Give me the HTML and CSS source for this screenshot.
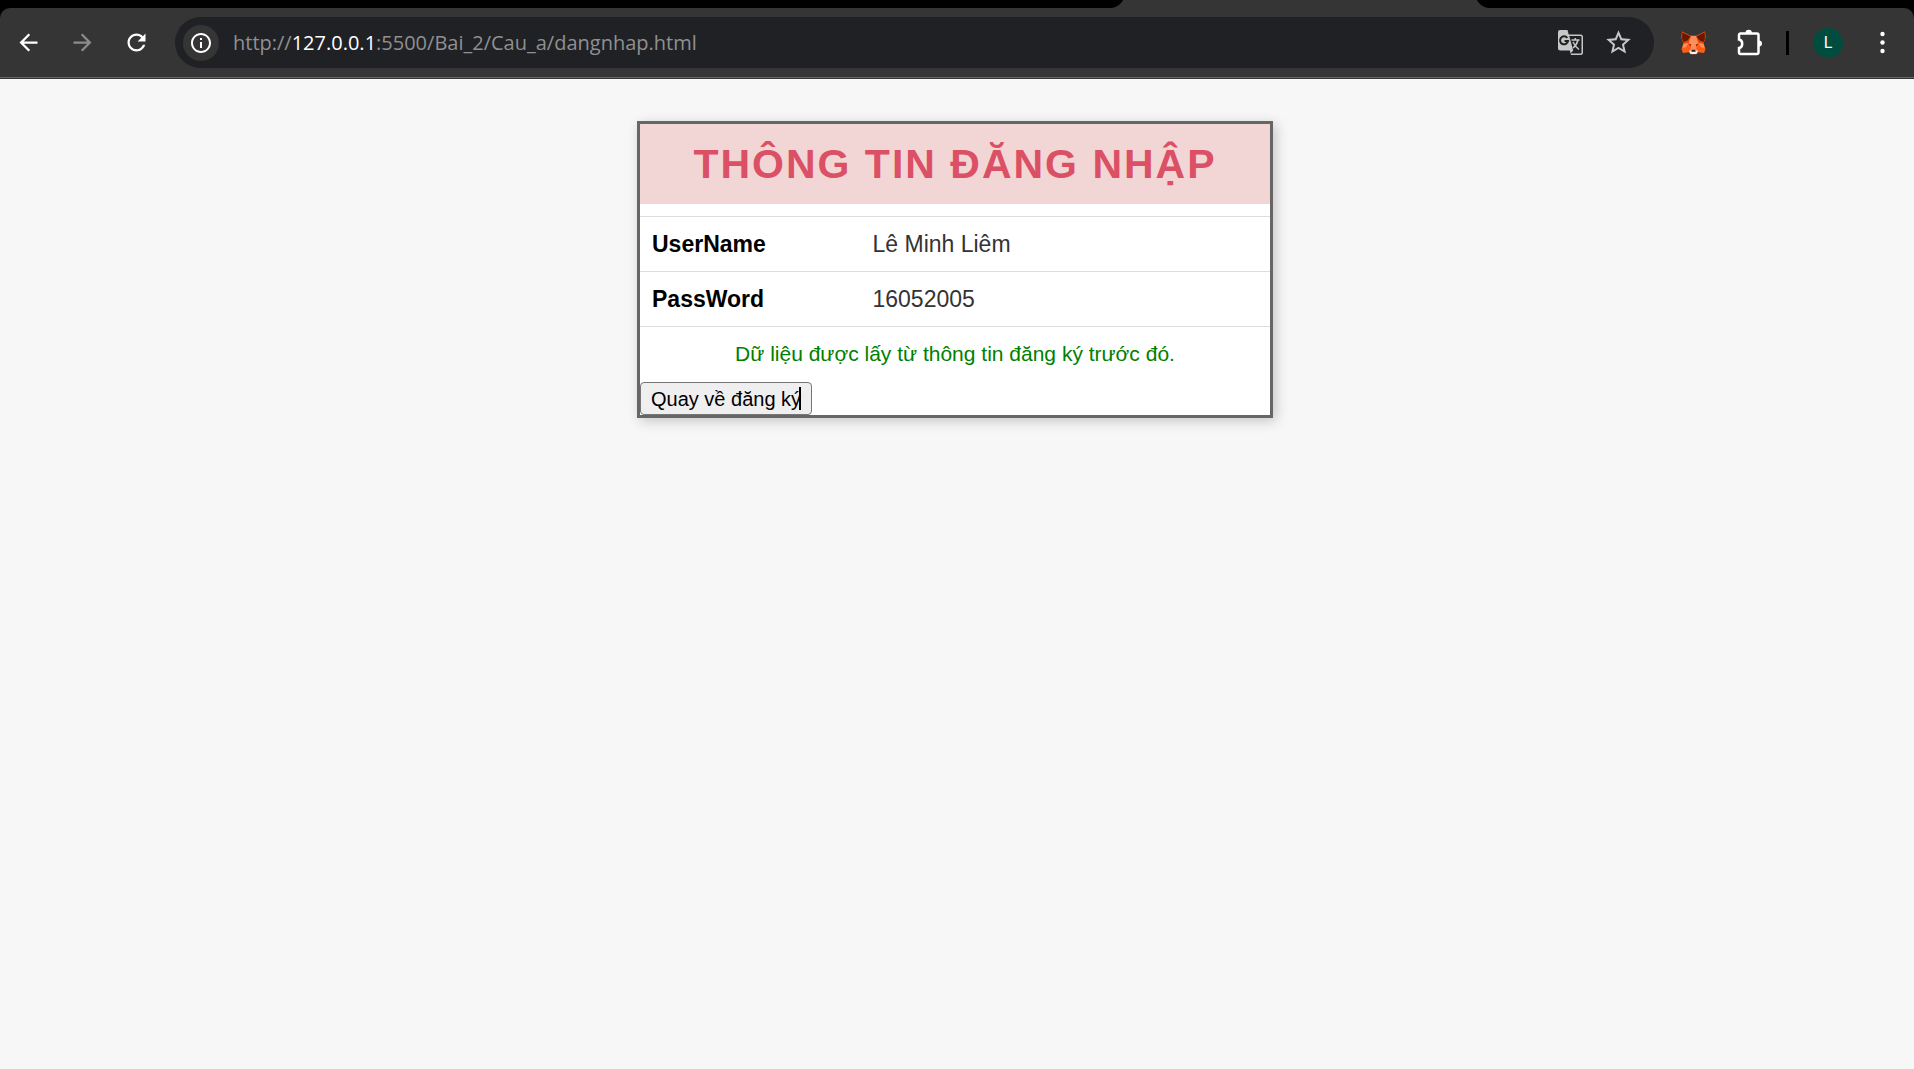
FILE: index.html
```html
<!DOCTYPE html>
<html lang="vi">
<head>
<meta charset="utf-8">
<title>Thông tin đăng nhập</title>
<link rel="stylesheet" href="styles.css">
</head>
<body>
<header class="browser">
  <div class="tabstrip">
    <svg class="tab" viewBox="0 0 376 8" preserveAspectRatio="none" aria-hidden="true"><path d="M0 8C5 7 9 4 11 0H365C367 4 371 7 376 8z"/></svg>
  </div>
  <div class="toolbar">
    <nav class="nav" aria-label="Navigation">
      <button class="tool" aria-label="Back"><svg class="icon" viewBox="0 0 24 24"><path d="M20 11H7.83l5.59-5.59L12 4l-8 8 8 8 1.41-1.41L7.83 13H20v-2z"/></svg></button>
      <button class="tool tool-off" aria-label="Forward"><svg class="icon" viewBox="0 0 24 24"><path d="M4 11h12.17l-5.59-5.59L12 4l8 8-8 8-1.41-1.41L16.17 13H4v-2z"/></svg></button>
      <button class="tool" aria-label="Reload"><svg class="icon" viewBox="0 0 24 24"><path d="M17.65 6.35C16.2 4.9 14.21 4 12 4c-4.42 0-7.99 3.58-7.99 8s3.57 8 7.99 8c3.73 0 6.84-2.55 7.73-6h-2.08c-.82 2.33-3.04 4-5.65 4-3.31 0-6-2.69-6-6s2.69-6 6-6c1.66 0 3.14.69 4.22 1.78L13 11h7V4l-2.35 2.35z"/></svg></button>
    </nav>
    <div class="omnibox">
      <button class="site-info" aria-label="Site information"><svg class="icon-info" viewBox="0 0 24 24"><path d="M11 17h2v-6h-2v6zm1-15C6.48 2 2 6.48 2 12s4.480 10 10 10 10-4.480 10-10S17.520 2 12 2zm0 18c-4.410 0-8-3.590-8-8s3.590-8 8-8 8 3.590 8 8-3.590 8-8 8zM11 9h2V7h-2v2z"/></svg></button>
      <div class="url">http://<span class="host">127.0.0.1</span>:5500/Bai_2/Cau_a/dangnhap.html</div>
      <button class="tool tool-soft" aria-label="Translate"><svg class="icon" viewBox="0 0 27 27"><path fill-rule="evenodd" d="M3 1h7.500l1.200 4.500H23.500a2.500 2.500 0 0 1 2.500 2.500v15.500a2.500 2.500 0 0 1-2.500 2.500H14l-1.200-4.500H3.500A2.500 2.500 0 0 1 1 19V3a2 2 0 0 1 2-2zM12.200 7l4 14.500-2.700 3h10a1 1 0 0 0 1-1V8a1 1 0 0 0-1-1z"/><path class="glyph-dark" d="M10.300 9A4 4 0 1 0 11 12H7.500"/><path class="glyph-light" d="M14.500 11h8M18.300 9v2M21 11c-1 4-3 6.500-5 8M16 13c1.500 3 3.500 5.500 6 7.500"/></svg></button>
      <button class="tool tool-soft" aria-label="Bookmark"><svg class="icon" viewBox="1 1 22 22"><path d="M22 9.240l-7.190-.62L12 2 9.190 8.630 2 9.240l5.460 4.730L5.820 21 12 17.270 18.180 21l-1.630-7.030L22 9.240zM12 15.400l-3.760 2.270 1-4.280-3.320-2.880 4.380-.38L12 6.100l1.710 4.040 4.380.38-3.320 2.880 1 4.280L12 15.400z"/></svg></button>
    </div>
    <div class="actions">
      <button class="tool" aria-label="Wallet extension"><svg class="icon" viewBox="0 0 27 27">
        <path fill="#ff5c16" d="M2 2.500L11 7h5l9-4.500L25.500 9 23.500 14l2 6-1.500 4-5.500-.8-2.500 2h-5l-2.500-2L3 24l-1.500-4 2-6-2-5z"/>
        <path fill="#ff8d5d" d="M10.500 6.800h6l2 7.200 5 1 1 4-5.500-1-3 4h-5l-3-4-5.500 1 1-4 5-1z"/>
        <path fill="#e34807" d="M2 2.500L11 7l-2.500 7-5 0-2-5zM25 2.500L16 7l2.500 7h5l2-5z"/>
        <path fill="#661800" d="M2.500 3.500L10.500 7.500l-3 4L3.500 13 2 9.500zM24.500 3.500l-8 4 3 4 4 1.500L25 9.500z"/>
        <path fill="#ff5c16" d="M8.500 14l2.500 2-.5 5-5-2zM18.500 14L16 16l.5 5 5-2z"/>
        <path fill="#661800" d="M8.500 14.500l2.800 1.200-.8 1.300zM18.500 14.500l-2.800 1.200.8 1.300z"/>
        <path fill="#f5eeee" d="M9 21.500h9l-1.500 3.500h-6z"/>
        <path fill="#3b1c15" d="M11.800 20.800h3.400l.5 2h-4.400z"/></svg></button>
      <button class="tool" aria-label="Extensions"><svg class="icon" viewBox="0 0 27 27"><path class="piece" d="M4.500 4.500H21a1.500 1.500 0 0 1 1.500 1.500V23.500a1.500 1.500 0 0 1-1.500 1.500H4.500A1.500 1.500 0 0 1 3 23.500v-4.500c4.300-.5 4.300-8 0-8.500V6A1.500 1.500 0 0 1 4.500 4.500z"/><path d="M9.500 4a3.200 3.200 0 0 1 6.400 0zM23 11.500a3 3 0 0 1 0 6z"/></svg></button>
      <span class="divider"></span>
      <button class="avatar" aria-label="Profile">L</button>
      <button class="tool" aria-label="Menu"><svg class="icon" viewBox="0 0 27 27"><circle cx="13.500" cy="5" r="2.200"/><circle cx="13.500" cy="13.500" r="2.200"/><circle cx="13.500" cy="22" r="2.200"/></svg></button>
    </div>
  </div>
</header>
<main class="page">
  <section class="card">
    <h1 class="title">THÔNG TIN ĐĂNG NHẬP</h1>
    <table class="info">
      <tr><th scope="row">UserName</th><td>Lê Minh Liêm</td></tr>
      <tr><th scope="row">PassWord</th><td>16052005</td></tr>
    </table>
    <p class="note">Dữ liệu được lấy từ thông tin đăng ký trước đó.</p>
    <button class="back">Quay về đăng ký<span class="caret"></span></button>
  </section>
</main>
</body>
</html>
```

FILE: styles.css
```css
* { box-sizing: border-box; }

body {
  margin: 0;
  min-height: 100vh;
  background: #f7f7f7;
  font-family: "Liberation Sans", Arial, sans-serif;
}

button { font-family: inherit; }

/* Browser chrome */
.browser {
  background: #000;
  border-bottom: 1px solid #353535;
}

.tabstrip {
  display: flex;
  justify-content: flex-end;
  height: 8px;
  padding-right: 426px;
}

.tab {
  width: 376px;
  height: 8px;
  fill: #353535;
}

.toolbar {
  display: flex;
  align-items: center;
  height: 70px;
  padding: 0 15px 0 11px;
  background: #353535;
  border-bottom: 1px solid #666;
  border-radius: 10px 10px 0 0;
}

.nav {
  display: flex;
  gap: 20px;
  margin-right: 22px;
}

.tool {
  display: flex;
  align-items: center;
  justify-content: center;
  width: 34px;
  height: 34px;
  padding: 0;
  border: 0;
  background: none;
  color: #fff;
}

.tool-off { color: #8c8c8c; }
.tool-soft { color: #c7c7c7; }

.icon {
  width: 27px;
  height: 27px;
  fill: currentColor;
}

.omnibox {
  display: flex;
  flex: 1;
  align-items: center;
  gap: 14px;
  height: 51px;
  padding: 0 19px 0 8px;
  background: #202124;
  border-radius: 26px;
}

.site-info {
  display: flex;
  align-items: center;
  justify-content: center;
  width: 36px;
  height: 36px;
  padding: 0;
  border: 0;
  border-radius: 50%;
  background: #353535;
  color: #fff;
}

.icon-info {
  width: 24px;
  height: 24px;
  fill: currentColor;
}

.url {
  flex: 1;
  color: #8f9092;
  font: 20px/27px "Open Sans", "Noto Sans", sans-serif;
  white-space: nowrap;
}

.host { color: #fff; }

.glyph-dark,
.glyph-light {
  fill: none;
  stroke: #202124;
  stroke-width: 2;
}

.glyph-light {
  stroke: currentColor;
  stroke-width: 1.5;
}

.piece {
  fill: none;
  stroke: currentColor;
  stroke-width: 2.5;
}

.actions {
  display: flex;
  align-items: center;
  gap: 22px;
  margin-left: 22px;
}

.divider {
  width: 3px;
  height: 24px;
  margin-left: -2px;
  background: #000;
}

.avatar {
  width: 30px;
  height: 30px;
  margin-left: 2px;
  padding: 0;
  border: 0;
  border-radius: 50%;
  background: #004d40;
  color: #fff;
  font: 16px/30px Roboto, sans-serif;
}

/* Login summary */
.page { padding: 42px 4px 42px 0; }

.card {
  max-width: 636px;
  margin: 0 auto;
  background: #fff;
  border: 3px solid #666;
  box-shadow: 3px 3px 12px rgba(0, 0, 0, 0.2);
}

.title {
  margin: 0 0 12px;
  background: #f2d6d6;
  color: #db5065;
  font-size: 41px;
  line-height: 80px;
  letter-spacing: 2px;
  text-align: center;
}

.info {
  width: 100%;
  border-spacing: 0;
  border-bottom: 1px solid #ddd;
  font-size: 23px;
  line-height: 26px;
}

.info th,
.info td {
  padding: 14px 12px;
  border-top: 1px solid #ddd;
  text-align: left;
}

.info th {
  width: 35%;
  color: #000;
}

.info td { color: #333; }

.note {
  margin: 0;
  padding-bottom: 1px;
  color: #008000;
  font-size: 21px;
  line-height: 54px;
  text-align: center;
}

.back {
  position: relative;
  display: block;
  height: 33px;
  padding: 1px 10px 0;
  background: #efefef;
  border: 1px solid #767676;
  border-radius: 4px;
  color: #000;
  font-size: 20px;
}

.caret {
  position: absolute;
  top: 4px;
  right: 10px;
  width: 2px;
  height: 23px;
  background: #000;
}
```
